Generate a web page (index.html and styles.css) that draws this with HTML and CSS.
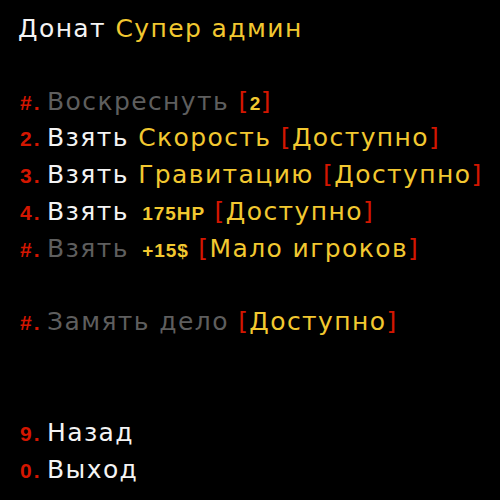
FILE: index.html
```html
<!DOCTYPE html>
<html lang="ru">
<head>
<meta charset="utf-8">
<link rel="stylesheet" href="styles.css">
</head>
<body>
<div class="menu">
  <div class="line title">Донат <span class="y">Супер админ</span></div>
  <div class="line blank"></div>
  <div class="line dis"><span class="num">#.</span>Воскреснуть <span class="r">[</span><span class="y small">2</span><span class="r">]</span></div>
  <div class="line"><span class="num">2.</span>Взять <span class="y">Скорость</span> <span class="r">[</span><span class="y">Доступно</span><span class="r">]</span></div>
  <div class="line"><span class="num">3.</span>Взять <span class="y">Гравитацию</span> <span class="r">[</span><span class="y">Доступно</span><span class="r">]</span></div>
  <div class="line"><span class="num">4.</span>Взять <span class="y small stat">175HP</span> <span class="r">[</span><span class="y">Доступно</span><span class="r">]</span></div>
  <div class="line dis"><span class="num">#.</span>Взять <span class="y small stat">+15$</span> <span class="r">[</span><span class="y">Мало игроков</span><span class="r">]</span></div>
  <div class="line blank"></div>
  <div class="line dis"><span class="num">#.</span>Замять дело <span class="r">[</span><span class="y">Доступно</span><span class="r">]</span></div>
  <div class="line blank"></div>
  <div class="line blank"></div>
  <div class="line"><span class="num">9.</span>Назад</div>
  <div class="line"><span class="num">0.</span>Выход</div>
</div>
</body>
</html>
```
FILE: styles.css
```css
html, body {
  margin: 0;
  padding: 0;
  background: #000;
}
.menu {
  padding: 10px 0 0 18px;
  font-family: "DejaVu Sans", Verdana, sans-serif;
  font-size: 25px;
  letter-spacing: 1.4px;
  color: #f4f4f4;
}
.line {
  height: 36.8px;
  line-height: 36.8px;
  white-space: nowrap;
}
.title {
  padding-top: 1px;
  height: 35.8px;
}
.line.dis {
  color: #5e5e5e;
}
.num {
  display: inline-block;
  width: 27px;
  margin-left: 2px;
  font-family: "Liberation Sans", Arial, sans-serif;
  font-size: 21px;
  font-weight: bold;
  letter-spacing: 2px;
  color: #d41600;
}
.y {
  color: #f2c830;
}
.r {
  color: #d41600;
}
.small {
  font-family: "Liberation Sans", Arial, sans-serif;
  font-size: 19px;
  font-weight: bold;
  letter-spacing: 0.5px;
}
.stat {
  margin-left: 4px;
  letter-spacing: 1px;
}
```
